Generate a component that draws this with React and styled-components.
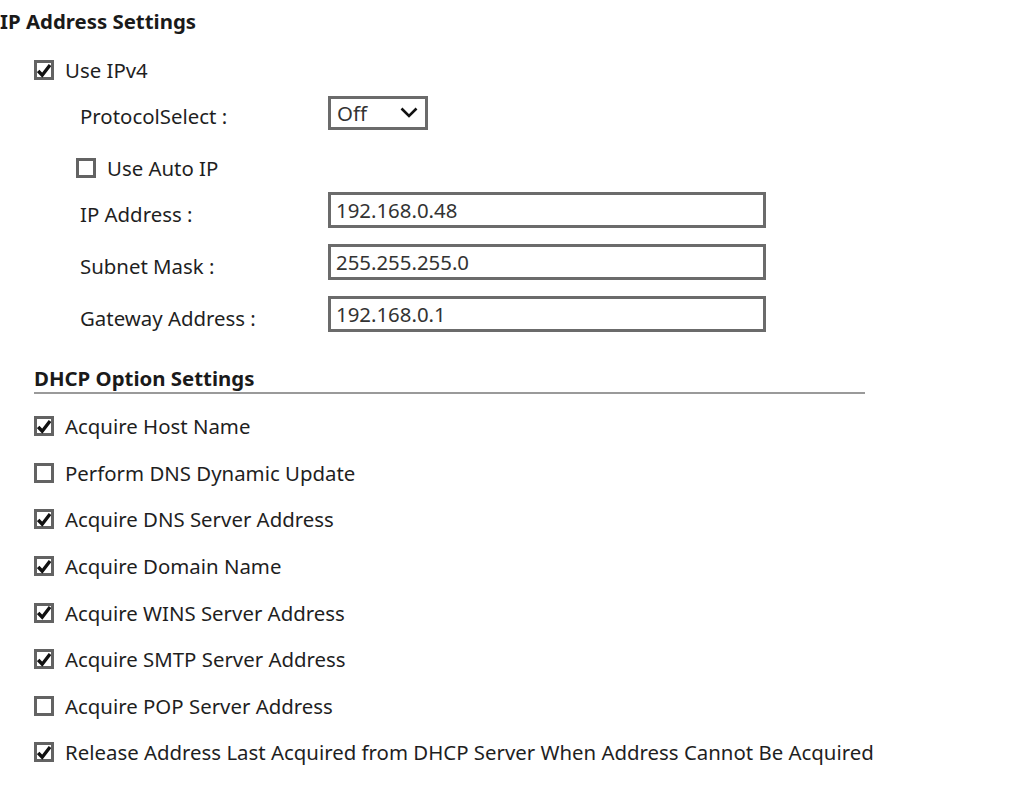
import React from "react";
import styled, { createGlobalStyle } from "styled-components";

const GlobalStyle = createGlobalStyle`
  html, body {
    margin: 0;
    padding: 0;
    background: #ffffff;
  }
  body {
    font-family: "Noto Sans", "Open Sans", sans-serif;
    color: #1f1f1f;
  }
`;

const Page = styled.div`
  width: 1013px;
`;

const Title = styled.h2`
  margin: 0;
  height: 42px;
  line-height: 42px;
  font-size: 20.4px;
  font-weight: 700;
  color: #1a1a1a;
`;

const Section = styled.div`
  padding-left: 34px;
  display: flex;
  flex-direction: column;
`;

const Row = styled.div`
  display: flex;
  align-items: center;
  height: 46px;
  margin-top: ${(p) => p.$gap || 0}px;
  padding-left: ${(p) => p.$indent || 0}px;
`;

const FieldRow = styled(Row)`
  display: grid;
  grid-template-columns: 248px 1fr;
  padding-left: 46px;
`;

const Label = styled.span`
  font-size: 20.4px;
  color: #1f1f1f;
  white-space: nowrap;
`;

const Box = styled.span`
  box-sizing: border-box;
  width: 20px;
  height: 20px;
  border: 3px solid #636363;
  background: #fff;
  display: inline-flex;
  align-items: center;
  justify-content: center;
  margin-right: 11px;
  flex-shrink: 0;
`;

const Select = styled.div`
  box-sizing: border-box;
  width: 100px;
  height: 34px;
  margin-bottom: 7px;
  border: 3px solid #6b6b6b;
  display: flex;
  align-items: center;
  justify-content: space-between;
  padding: 0 7px 0 6px;
  font-size: 20.4px;
  color: #333;
`;

const TextInput = styled.div`
  box-sizing: border-box;
  width: 438px;
  height: 36px;
  margin-bottom: 8px;
  border: 3px solid #6b6b6b;
  display: flex;
  align-items: center;
  padding-left: 5px;
  font-size: 20.4px;
  color: #333;
`;

const SubHeading = styled.h3`
  margin: 18px 0 0;
  width: 831px;
  height: 33px;
  line-height: 38px;
  font-size: 20.4px;
  font-weight: 700;
  color: #1a1a1a;
  border-bottom: 2px solid #9a9a9a;
`;

const OptionList = styled.div`
  display: flex;
  flex-direction: column;
  padding-top: 9px;
`;

const OptionRow = styled.div`
  display: flex;
  align-items: center;
  height: 46.6px;
`;

const Check = ({ checked }) => (
  <Box>
    {checked && (
      <svg width="15" height="15" viewBox="0 0 15 15">
        <path d="M1.3 8 L5.6 12.6 L14 1.6" fill="none" stroke="#111" strokeWidth="3.6" />
      </svg>
    )}
  </Box>
);

const Chevron = () => (
  <svg width="18" height="11" viewBox="0 0 18 11">
    <path d="M1.5 1.5 L9 9 L16.5 1.5" fill="none" stroke="#111" strokeWidth="2.6" />
  </svg>
);

const fields = [
  { label: "IP Address :", value: "192.168.0.48" },
  { label: "Subnet Mask :", value: "255.255.255.0" },
  { label: "Gateway Address :", value: "192.168.0.1" },
];

const options = [
  { label: "Acquire Host Name", checked: true },
  { label: "Perform DNS Dynamic Update", checked: false },
  { label: "Acquire DNS Server Address", checked: true },
  { label: "Acquire Domain Name", checked: true },
  { label: "Acquire WINS Server Address", checked: true },
  { label: "Acquire SMTP Server Address", checked: true },
  { label: "Acquire POP Server Address", checked: false },
  {
    label: "Release Address Last Acquired from DHCP Server When Address Cannot Be Acquired",
    checked: true,
  },
];

export default function App() {
  return (
    <Page>
      <GlobalStyle />
      <Title>IP Address Settings</Title>
      <Section>
        <Row $gap={5}>
          <Check checked />
          <Label>Use IPv4</Label>
        </Row>
        <FieldRow>
          <Label>ProtocolSelect :</Label>
          <Select>
            <span>Off</span>
            <Chevron />
          </Select>
        </FieldRow>
        <Row $gap={6} $indent={42}>
          <Check />
          <Label>Use Auto IP</Label>
        </Row>
        {fields.map((f, i) => (
          <FieldRow key={f.label} $gap={i === 0 ? 0 : 6}>
            <Label>{f.label}</Label>
            <TextInput>{f.value}</TextInput>
          </FieldRow>
        ))}
        <SubHeading>DHCP Option Settings</SubHeading>
        <OptionList>
          {options.map((o) => (
            <OptionRow key={o.label}>
              <Check checked={o.checked} />
              <Label>{o.label}</Label>
            </OptionRow>
          ))}
        </OptionList>
      </Section>
    </Page>
  );
}
